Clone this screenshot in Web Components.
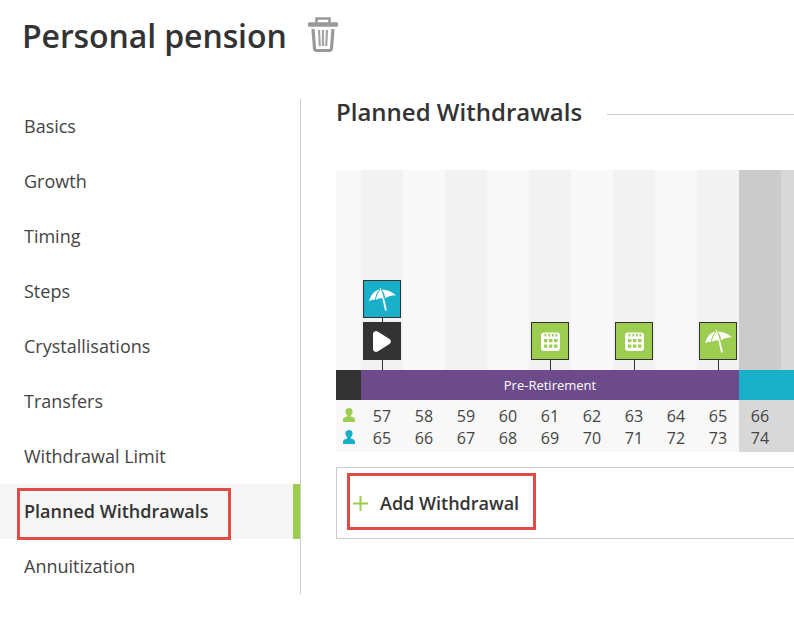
<!DOCTYPE html>
<html>
<head>
<meta charset="utf-8">
<title>Personal pension</title>
<style>
  html, body { margin: 0; height: 625px; overflow: hidden; background: #fff; }
  body { font-family: "Open Sans", sans-serif; color: #333; }
</style>
</head>
<body>
<template id="umbrella">
  <svg viewBox="0 0 27 23" width="27" height="23" fill="#fff">
    <path d="M10.500 1.500C5.500 2.500 1.500 7 0 13.500c2-1.700 4-2.100 6-1.500.3-4 1.800-7.500 4.500-10.500z"/>
    <path d="M11.500 1.500C9 4.500 7.300 8 7 12c2-1.500 5-2 7.500-1.500 0-3.500-1-6.500-3-9z"/>
    <path d="M12.500 1.500c2.500 2.500 3.500 5.500 3.500 8.800 2-1.600 6-2.800 11-3C23 3.800 18 1.500 12.500 1.500z"/>
    <path d="M10.600 0h1.200l.4 1.500h-1.200zM13.300 10.200l1.700-.3 2.900 12.400-1.800.4z"/>
  </svg>
</template>
<template id="calendar">
  <svg viewBox="0 0 19 19" width="19" height="19" fill="#fff">
    <path fill-rule="evenodd" d="M3 .5h13A3 3 0 0 1 19 3.500v12.500a3 3 0 0 1-3 3H3a3 3 0 0 1-3-3V3.500A3 3 0 0 1 3 .5zM3.500 1.800v2.700h1.800V1.800zm3.900 0v2.700h1.800V1.800zm3.500 0v2.700h1.800V1.800zm3.500 0v2.700h1.800V1.800zM3 7v3.300h3.400V7zm5 0v3.300h3.400V7zm5 0v3.300h3.400V7zM3 12.500v3.300h3.400v-3.300zm5 0v3.300h3.400v-3.300zm5 0v3.300h3.400v-3.300z"/>
  </svg>
</template>
<template id="play">
  <svg viewBox="0 0 18 21" width="18" height="21" fill="#fff">
    <path d="M0 3a3 3 0 0 1 4.600-2.500l11.900 7.500a3 3 0 0 1 0 5L4.600 20.500A3 3 0 0 1 0 18z"/>
  </svg>
</template>

<pension-page></pension-page>

<script>
class PageTitle extends HTMLElement {
  constructor() {
    super();
    this.attachShadow({ mode: 'open' });
    this.shadowRoot.innerHTML = `
      <style>
        :host { display: flex; align-items: center; gap: 21px; height: 99px; padding: 0 0 28px 22px; box-sizing: border-box; }
        h1 { margin: 0; font-size: 32px; font-weight: 600; line-height: 72px; color: #333; letter-spacing: -.1px; }
        svg { display: block; margin-top: -2px; }
      </style>
      <h1><slot></slot></h1>
      <svg viewBox="0 0 30 35" width="30" height="35" fill="none" stroke="#999">
        <path d="M1.500 7.500h27" stroke-width="4.500" stroke-linecap="round"/>
        <path d="M8.500 6V1.500h13V6" stroke-width="2.500"/>
        <path d="M5 12l1.500 19a2.500 2.500 0 0 0 2.500 2.500h12a2.500 2.500 0 0 0 2.500-2.500L25 12" stroke-width="3.200"/>
        <path d="M11 13l.8 16M15 13v16M19 13l-.8 16" stroke-width="2.200" stroke="#a4a4a4"/>
      </svg>
    `;
  }
}

class SideNav extends HTMLElement {
  constructor() {
    super();
    this.attachShadow({ mode: 'open' });
    this.shadowRoot.innerHTML = `
      <style>
        :host { display: block; width: 301px; height: 495px; box-sizing: border-box; border-right: 1px solid #ccc; flex: none; }
      </style>
      <slot></slot>
    `;
  }
}

class NavItem extends HTMLElement {
  constructor() {
    super();
    this.attachShadow({ mode: 'open' });
    this.shadowRoot.innerHTML = `
      <style>
        :host { display: flex; align-items: center; height: 55px; padding: 0 0 2px 24px; box-sizing: border-box; font-size: 18px; color: #444; position: relative; }
        :host([active]) { background: #f6f6f6; border-right: 7px solid #9ccc50; font-weight: 600; color: #333; }
        .mark { display: none; position: absolute; left: 17px; top: 4px; width: 214px; height: 52px; box-sizing: border-box; border: 3px solid #e24a48; }
        :host([active]) .mark { display: block; }
      </style>
      <slot></slot>
      <div class="mark"></div>
    `;
  }
}

class TimelineChart extends HTMLElement {
  constructor() {
    super();
    this.attachShadow({ mode: 'open' });
  }

  connectedCallback() {
    const icons = {
      57: [['umbrella', 'teal'], ['play', 'dark']],
      61: [['calendar', 'green']],
      63: [['calendar', 'green']],
      65: [['umbrella', 'green']]
    };
    const person = (c) => `
      <svg viewBox="0 0 12 14" width="12" height="14" fill="${c}">
        <path d="M6 0c2.300 0 3.600 1.500 3.600 3.500 0 1.500-.8 3-1.800 3.800v1.100c2 .6 4.200 1.300 4.200 3.100V14H0v-2.500c0-1.800 2.200-2.500 4.200-3.100V7.300C3.200 6.500 2.400 5 2.400 3.500 2.400 1.500 3.700 0 6 0z"/>
      </svg>`;

    let cols = '<div class="col first"></div>';
    let ages = `<div class="who">${person('#9ccc50')}${person('#1aafc9')}</div>`;
    for (let i = 0; i < 11; i++) {
      const a = 57 + i;
      const cls = i === 9 ? 'ret1' : i === 10 ? 'ret2' : i % 2 === 0 ? 'even' : 'odd';
      const marks = (icons[a] || []).map(([icon, color]) => `
        <div class="mark ${color}">${document.getElementById(icon).innerHTML}</div>
      `).join('');
      cols += `<div class="col ${cls}">${marks}</div>`;
      ages += `<div class="age ${i >= 9 ? 'ret' : ''}"><span>${i < 10 ? a : ''}</span><span>${i < 10 ? a + 8 : ''}</span></div>`;
    }

    this.shadowRoot.innerHTML = `
      <style>
        :host { display: block; width: 520px; margin-top: 43px; }
        .cols, .ages { display: grid; grid-template-columns: 25px repeat(10, 42px) 1fr; }
        .cols { height: 200px; }
        .col { display: flex; flex-direction: column; align-items: center; justify-content: flex-end; padding-bottom: 10px; box-sizing: border-box; }
        .first, .odd { background: #f8f8f8; }
        .even { background: #f2f2f2; }
        .ret1 { background: #cbcbcb; }
        .ret2 { background: #d8d8d8; }
        .mark { width: 38px; height: 38px; box-sizing: border-box; border: 1px solid #333; display: flex; align-items: center; justify-content: center; position: relative; margin-top: 4px; }
        .mark::after { content: ''; position: absolute; left: 18px; top: 100%; width: 1px; height: 4px; margin-top: 1px; background: #333; }
        .mark:last-child::after { height: 10px; }
        .teal { background: #1aafc9; }
        .green { background: #9ccc50; }
        .dark { background: #333; }
        .bar { display: grid; height: 30px; grid-template-columns: 25px 378px 1fr; font-size: 13px; color: #fff; }
        .bar div { display: flex; align-items: center; justify-content: center; }
        .bar .start { background: #333; }
        .bar .pre { background: #6d4a8a; }
        .bar .ret { background: #1aafc9; }
        .ages { height: 52px; background: #f8f8f8; font-size: 16px; color: #444; }
        .who { display: flex; flex-direction: column; align-items: center; padding-top: 8px; gap: 8px; }
        .who svg { display: block; }
        .age { display: flex; flex-direction: column; align-items: center; line-height: 22px; padding-top: 5px; }
        .age.ret { background: #d8d8d8; }
        .age span { height: 22px; }
      </style>
      <div class="cols">${cols}</div>
      <div class="bar">
        <div class="start"></div>
        <div class="pre">Pre-Retirement</div>
        <div class="ret"></div>
      </div>
      <div class="ages">${ages}</div>
    `;
  }
}

class AddButton extends HTMLElement {
  constructor() {
    super();
    this.attachShadow({ mode: 'open' });
    this.shadowRoot.innerHTML = `
      <style>
        :host { display: flex; align-items: center; width: 520px; height: 72px; margin-top: 15px; box-sizing: border-box; border: 1px solid #ccc; padding-left: 16px; position: relative; font-size: 18px; font-weight: 600; color: #333; }
        svg { margin-right: 12px; flex: none; }
        .mark { position: absolute; left: 10px; top: 5px; width: 189px; height: 57px; box-sizing: border-box; border: 3px solid #e24a48; }
      </style>
      <svg viewBox="0 0 15 15" width="15" height="15" stroke="#9ccc50" stroke-width="2"><path d="M7.500 0v15M0 7.500h15"/></svg>
      <span><slot></slot></span>
      <div class="mark"></div>
    `;
  }
}

class SectionHead extends HTMLElement {
  constructor() {
    super();
    this.attachShadow({ mode: 'open' });
    this.shadowRoot.innerHTML = `
      <style>
        :host { display: flex; align-items: center; gap: 25px; height: 30px; margin-top: -2px; width: 458px; }
        h2 { margin: 0; font-size: 24px; font-weight: 600; line-height: 30px; color: #333; white-space: nowrap; }
        i { flex: 1; height: 1px; background: #ccc; margin-top: 5px; }
      </style>
      <h2><slot></slot></h2>
      <i></i>
    `;
  }
}

class PensionPage extends HTMLElement {
  constructor() {
    super();
    this.attachShadow({ mode: 'open' });
    this.shadowRoot.innerHTML = `
      <style>
        :host { display: block; width: 794px; height: 625px; overflow: hidden; }
        .row { display: flex; }
        main { margin-left: 35px; }
      </style>
      <page-title>Personal pension</page-title>
      <div class="row">
        <side-nav>
          <nav-item>Basics</nav-item>
          <nav-item>Growth</nav-item>
          <nav-item>Timing</nav-item>
          <nav-item>Steps</nav-item>
          <nav-item>Crystallisations</nav-item>
          <nav-item>Transfers</nav-item>
          <nav-item>Withdrawal Limit</nav-item>
          <nav-item active>Planned Withdrawals</nav-item>
          <nav-item>Annuitization</nav-item>
        </side-nav>
        <main>
          <section-head>Planned Withdrawals</section-head>
          <timeline-chart></timeline-chart>
          <add-button>Add Withdrawal</add-button>
        </main>
      </div>
    `;
  }
}

customElements.define('page-title', PageTitle);
customElements.define('side-nav', SideNav);
customElements.define('nav-item', NavItem);
customElements.define('timeline-chart', TimelineChart);
customElements.define('add-button', AddButton);
customElements.define('section-head', SectionHead);
customElements.define('pension-page', PensionPage);
</script>
</body>
</html>
